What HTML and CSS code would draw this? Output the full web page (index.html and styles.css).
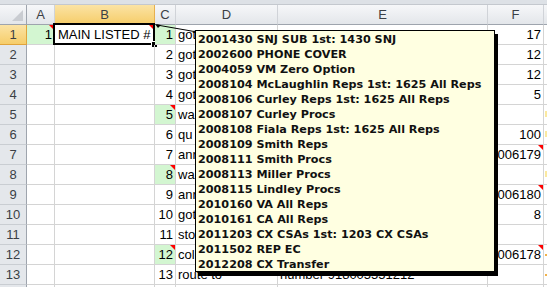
FILE: index.html
```html
<!DOCTYPE html>
<html lang="en">
<head>
    <meta charset="UTF-8">
    <title>Sheet1</title>
    <link rel="stylesheet" href="styles.css">
</head>
<body>
    <div class="sheet">
        <div class="topstrip"></div>
        <div class="row head">
            <div class="hd corner"><span class="selall"></span></div>
            <div class="hd">A</div>
            <div class="hd active">B</div>
            <div class="hd">C</div>
            <div class="hd">D</div>
            <div class="hd">E</div>
            <div class="hd">F</div>
            <div class="hd"></div>
        </div>

        <div class="row">
            <div class="rh active">1</div>
            <div class="c num good"><span class="note"></span>1</div>
            <div class="c sel-cell"><span class="note"></span>MAIN LISTED #<span class="selbox"></span><span class="handle"></span></div>
            <div class="c num good">1</div>
            <div class="c">got</div>
            <div class="c"></div>
            <div class="c num">17</div>
            <div class="c"></div>
        </div>
        <div class="row">
            <div class="rh">2</div>
            <div class="c"></div>
            <div class="c"></div>
            <div class="c num">2</div>
            <div class="c">got</div>
            <div class="c"></div>
            <div class="c num">12</div>
            <div class="c"></div>
        </div>
        <div class="row">
            <div class="rh">3</div>
            <div class="c"></div>
            <div class="c"></div>
            <div class="c num">3</div>
            <div class="c">got</div>
            <div class="c"></div>
            <div class="c num">12</div>
            <div class="c"></div>
        </div>
        <div class="row">
            <div class="rh">4</div>
            <div class="c"></div>
            <div class="c"></div>
            <div class="c num">4</div>
            <div class="c">got</div>
            <div class="c"></div>
            <div class="c num">5</div>
            <div class="c"></div>
        </div>
        <div class="row">
            <div class="rh">5</div>
            <div class="c"></div>
            <div class="c"></div>
            <div class="c num good"><span class="note"></span>5</div>
            <div class="c">wa</div>
            <div class="c"></div>
            <div class="c num"></div>
            <div class="c"><span class="mark"></span></div>
        </div>
        <div class="row">
            <div class="rh">6</div>
            <div class="c"></div>
            <div class="c"></div>
            <div class="c num">6</div>
            <div class="c">qu</div>
            <div class="c"></div>
            <div class="c num">100</div>
            <div class="c"><span class="mark"></span></div>
        </div>
        <div class="row">
            <div class="rh">7</div>
            <div class="c"></div>
            <div class="c"></div>
            <div class="c num">7</div>
            <div class="c">anr</div>
            <div class="c"></div>
            <div class="c num"><span class="note"></span>2006179</div>
            <div class="c"></div>
        </div>
        <div class="row">
            <div class="rh">8</div>
            <div class="c"></div>
            <div class="c"></div>
            <div class="c num good"><span class="note"></span>8</div>
            <div class="c">wa</div>
            <div class="c"></div>
            <div class="c num"></div>
            <div class="c"><span class="mark"></span></div>
        </div>
        <div class="row">
            <div class="rh">9</div>
            <div class="c"></div>
            <div class="c"></div>
            <div class="c num">9</div>
            <div class="c">anr</div>
            <div class="c"></div>
            <div class="c num"><span class="note"></span>2006180</div>
            <div class="c"></div>
        </div>
        <div class="row">
            <div class="rh">10</div>
            <div class="c"></div>
            <div class="c"></div>
            <div class="c num">10</div>
            <div class="c">got</div>
            <div class="c"></div>
            <div class="c num">8</div>
            <div class="c"></div>
        </div>
        <div class="row">
            <div class="rh">11</div>
            <div class="c"></div>
            <div class="c"></div>
            <div class="c num">11</div>
            <div class="c">sto</div>
            <div class="c"></div>
            <div class="c num"></div>
            <div class="c"></div>
        </div>
        <div class="row">
            <div class="rh">12</div>
            <div class="c"></div>
            <div class="c"></div>
            <div class="c num good"><span class="note"></span>12</div>
            <div class="c">col</div>
            <div class="c"></div>
            <div class="c num"><span class="note"></span>2006178</div>
            <div class="c"><span class="mark orange"></span></div>
        </div>
        <div class="row">
            <div class="rh">13</div>
            <div class="c"></div>
            <div class="c"></div>
            <div class="c num">13</div>
            <div class="c">route to</div>
            <div class="c">number 918005551212</div>
            <div class="c num"></div>
            <div class="c"><span class="mark orange"></span></div>
        </div>
        <div class="row">
            <div class="rh"></div>
            <div class="c"></div>
            <div class="c"></div>
            <div class="c num"></div>
            <div class="c"></div>
            <div class="c"></div>
            <div class="c num"></div>
            <div class="c"></div>
        </div>

        <svg class="connector" width="44" height="12" viewBox="0 0 44 12">
            <polygon points="0,0 6,1 3,4" fill="#000"/>
            <line x1="2" y1="1" x2="42" y2="8" stroke="#000" stroke-width="1"/>
        </svg>

        <div class="comment">
            <div>2001430 SNJ SUB 1st: 1430 SNJ</div>
            <div>2002600 PHONE COVER</div>
            <div>2004059 VM Zero Option</div>
            <div>2008104 McLaughlin Reps 1st: 1625 All Reps</div>
            <div>2008106 Curley Reps 1st: 1625 All Reps</div>
            <div>2008107 Curley Procs</div>
            <div>2008108 Fiala Reps 1st: 1625 All Reps</div>
            <div>2008109 Smith Reps</div>
            <div>2008111 Smith Procs</div>
            <div>2008113 Miller Procs</div>
            <div>2008115 Lindley Procs</div>
            <div>2010160 VA All Reps</div>
            <div>2010161 CA All Reps</div>
            <div>2011203 CX CSAs 1st: 1203 CX CSAs</div>
            <div>2011502 REP EC</div>
            <div>2012208 CX Transfer</div>
        </div>
    </div>
</body>
</html>
```

FILE: styles.css
```css
body {
    margin: 0;
    overflow: hidden;
    background: #fff;
}

.sheet {
    position: relative;
    width: 547px;
    height: 287px;
    overflow: hidden;
    font-family: "Liberation Sans", Arial, sans-serif;
    font-size: 13px;
    color: #000;
}

.topstrip {
    height: 4px;
    background: #dde1e6;
    border-bottom: 1px solid #c4c8ce;
}

.row {
    display: grid;
    grid-template-columns: 27px 28px 100px 21px 102px 210px 56px 20px;
    height: 20px;
}

.hd, .rh, .c {
    box-sizing: border-box;
    height: 20px;
    line-height: 19px;
    white-space: nowrap;
    position: relative;
}

.hd {
    background: linear-gradient(#f6f7f9, #e3e6ea);
    border-right: 1px solid #d0d3d8;
    border-bottom: 1px solid #9ea4ad;
    text-align: center;
    color: #3b3f45;
}

.hd.active {
    background: linear-gradient(#fbe3a4, #f6cd6a);
    border-right-color: #e6b04f;
    border-bottom-color: #e0a43c;
}

.corner {
    border-right-color: #9ea4ad;
}

.selall {
    position: absolute;
    right: 3px;
    bottom: 3px;
    width: 0;
    height: 0;
    border-bottom: 11px solid #c9ccd1;
    border-left: 11px solid transparent;
}

.rh {
    background: #e4e7eb;
    border-right: 1px solid #9ea4ad;
    border-bottom: 1px solid #c9cdd2;
    text-align: center;
    color: #3b3f45;
}

.rh.active {
    background: linear-gradient(#fbe3a4, #f6cd6a);
    border-bottom-color: #e0a43c;
    border-right-color: #e0a43c;
}

.c {
    border-right: 1px solid #d4d4d4;
    border-bottom: 1px solid #d4d4d4;
    padding: 0 2px;
}

.num {
    text-align: right;
}

.good {
    background: #d3f6d1;
}

.note {
    position: absolute;
    top: 0;
    right: 0;
    width: 0;
    height: 0;
    border-top: 5px solid #ff0000;
    border-left: 5px solid transparent;
}

.sel-cell {
    padding-left: 3px;
}

.selbox {
    position: absolute;
    left: -2px;
    top: -2px;
    right: -1px;
    bottom: -1px;
    border: 2px solid #000;
}

.handle {
    position: absolute;
    right: -3px;
    bottom: -3px;
    width: 5px;
    height: 5px;
    background: #000;
    border: 1px solid #fff;
    border-width: 1px 0 0 1px;
}

.mark {
    position: absolute;
    left: 1px;
    top: 6px;
    width: 2px;
    height: 6px;
    background: #fbe9a0;
}

.mark.orange {
    background: #f2b24a;
    height: 2px;
    top: 9px;
}

.connector {
    position: absolute;
    left: 155px;
    top: 24px;
}

.comment {
    position: absolute;
    left: 195px;
    top: 30px;
    width: 295px;
    height: 238px;
    padding: 1px 1px 1px 2px;
    background: #ffffe1;
    border: 1px solid #000;
    box-shadow: 3px 4px 0 #000;
    font-family: "DejaVu Sans", Verdana, sans-serif;
    font-weight: bold;
    font-size: 11.2px;
    line-height: 15px;
    color: #111;
    white-space: nowrap;
    overflow: hidden;
}
```
